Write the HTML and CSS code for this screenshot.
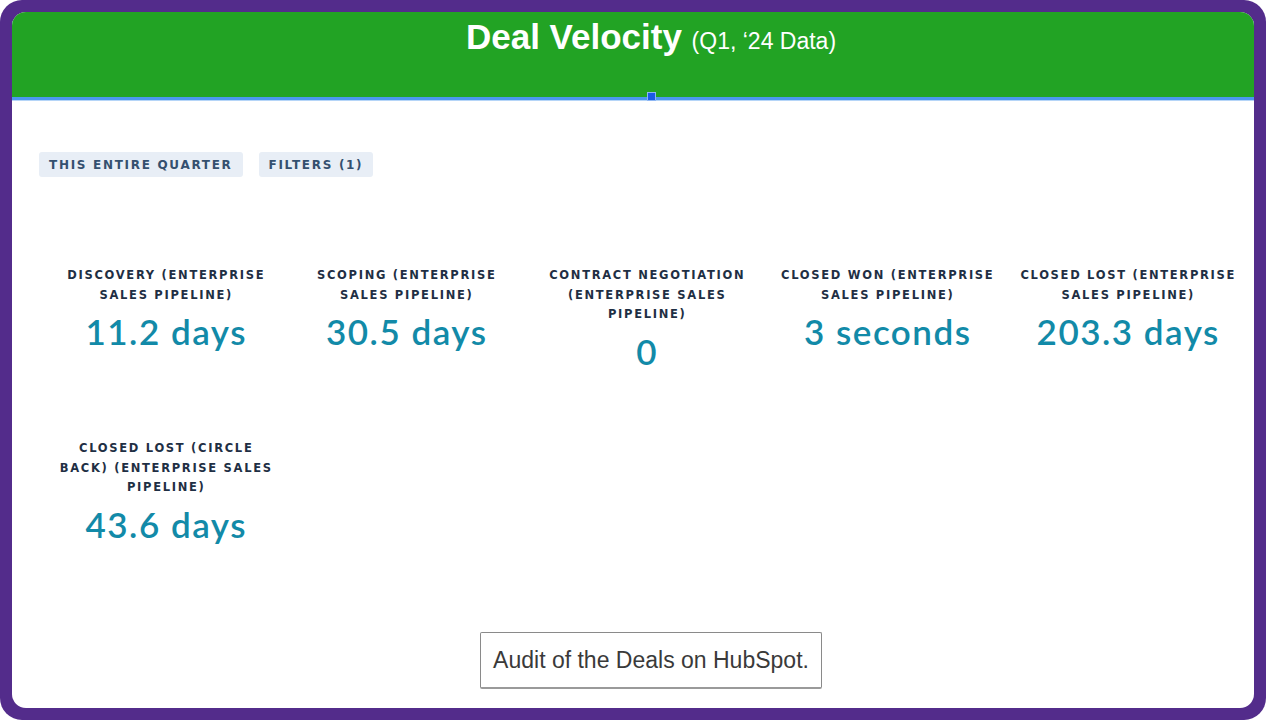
FILE: index.html
```html
<!DOCTYPE html>
<html>
<head>
<meta charset="utf-8">
<link rel="stylesheet" href="styles.css">
</head>
<body>
<div class="frame">
  <div class="card">
    <header class="header">
      <h1 class="title">Deal Velocity <span class="sub">(Q1, ‘24 Data)</span></h1>
      <span class="handle"></span>
    </header>
    <div class="chips">
      <span class="chip">THIS ENTIRE QUARTER</span>
      <span class="chip">FILTERS (1)</span>
    </div>
    <div class="grid">
      <div class="metric">
        <div class="label">DISCOVERY (ENTERPRISE SALES PIPELINE)</div>
        <div class="value">11.2 days</div>
      </div>
      <div class="metric">
        <div class="label">SCOPING (ENTERPRISE SALES PIPELINE)</div>
        <div class="value">30.5 days</div>
      </div>
      <div class="metric">
        <div class="label">CONTRACT NEGOTIATION (ENTERPRISE SALES PIPELINE)</div>
        <div class="value">0</div>
      </div>
      <div class="metric">
        <div class="label">CLOSED WON (ENTERPRISE SALES PIPELINE)</div>
        <div class="value">3 seconds</div>
      </div>
      <div class="metric">
        <div class="label">CLOSED LOST (ENTERPRISE SALES PIPELINE)</div>
        <div class="value">203.3 days</div>
      </div>
      <div class="metric">
        <div class="label">CLOSED LOST (CIRCLE BACK) (ENTERPRISE SALES PIPELINE)</div>
        <div class="value">43.6 days</div>
      </div>
    </div>
    <div class="footer">
      <div class="caption">Audit of the Deals on HubSpot.</div>
    </div>
  </div>
</div>
</body>
</html>
```

FILE: styles.css
```css
* { box-sizing: border-box; }
html, body { margin: 0; padding: 0; background: #ffffff; }
.frame {
  width: 1266px;
  height: 720px;
  background: #532c8b;
  border-radius: 22px;
  padding: 12px;
}
.card {
  position: relative;
  height: 100%;
  background: #ffffff;
  border-radius: 14px;
  overflow: hidden;
  display: flex;
  flex-direction: column;
}
.header {
  position: relative;
  height: 88px;
  background: #22a324;
  border-bottom: 3px solid #4b98ee;
  box-shadow: 0 1px 0 #b5d5f8;
  padding-left: 36px;
  text-align: center;
}
.title {
  margin: 0;
  padding-top: 5px;
  font-family: "Liberation Sans", Arial, sans-serif;
  font-weight: bold;
  font-size: 35px;
  line-height: 40px;
  color: #ffffff;
}
.sub {
  font-weight: normal;
  font-size: 23px;
}
.handle {
  position: absolute;
  left: 635px;
  top: 80px;
  width: 9px;
  height: 9px;
  background: #1a5ae6;
  border: 1px solid #8db6f5;
}
.chips {
  display: flex;
  gap: 16px;
  padding: 52px 0 0 27px;
}
.chip {
  display: inline-flex;
  align-items: center;
  height: 25px;
  padding: 0 10px;
  background: #e8eef6;
  border-radius: 3px;
  font-family: "DejaVu Sans", sans-serif;
  font-weight: bold;
  font-size: 12px;
  letter-spacing: 1.7px;
  color: #34506f;
}
.grid {
  display: grid;
  grid-template-columns: repeat(5, 240.5px);
  grid-auto-rows: 173px;
  margin: 89px 0 0 34px;
}
.metric {
  display: flex;
  flex-direction: column;
  align-items: center;
  text-align: center;
}
.label {
  max-width: 222px;
  font-family: "DejaVu Sans", sans-serif;
  font-weight: bold;
  font-size: 11.5px;
  line-height: 19.5px;
  letter-spacing: 1.7px;
  color: #1f2f44;
}
.value {
  margin-top: 6px;
  font-family: "Lato", "Noto Sans", sans-serif;
  font-weight: 600;
  font-size: 35px;
  line-height: 40px;
  letter-spacing: 1.5px;
  color: #128aa8;
}
.footer {
  display: flex;
  justify-content: center;
  padding-left: 36px;
  margin-top: auto;
  padding-bottom: 19px;
}
.caption {
  width: 342px;
  height: 57px;
  display: flex;
  align-items: center;
  justify-content: center;
  border: 1px solid #8a8a8a;
  border-bottom: 2px solid #9a9a9a;
  border-radius: 2px;
  font-family: "Liberation Sans", Arial, sans-serif;
  font-size: 23px;
  color: #3a3a3a;
}
```
